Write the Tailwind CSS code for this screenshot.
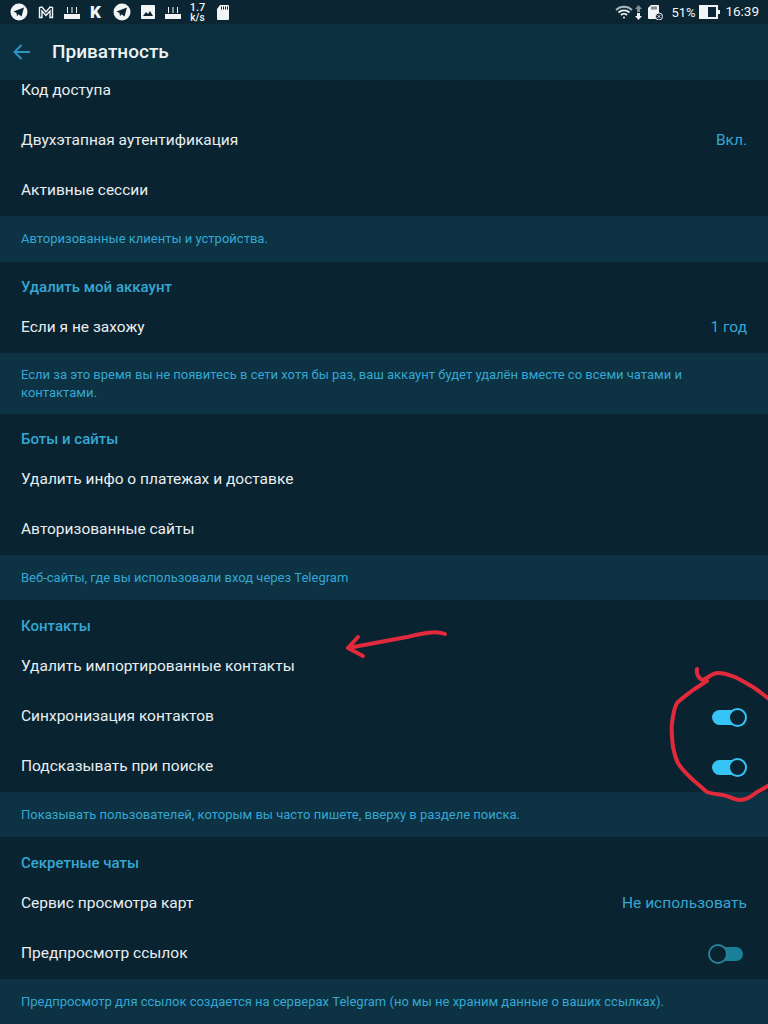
<!DOCTYPE html>
<html lang="ru">
<head>
  <meta charset="UTF-8">
  <title>Приватность</title>
  <script src="https://cdn.jsdelivr.net/npm/@tailwindcss/browser@4"></script>
</head>
<body class="bg-[#0a2330] text-white font-['Roboto',sans-serif]">
<div class="relative w-[768px] h-[1024px] overflow-hidden flex flex-col">

  <!-- status bar -->
  <div class="h-6 shrink-0 bg-[#0b2632] flex items-center justify-between pl-[10px] pr-[9px] text-[#f2f5f6]">
    <div class="flex items-center">
      <svg class="w-[18px] h-[18px] mr-[10px]" viewBox="0 0 18 18"><circle cx="9" cy="9" r="8.5" fill="#f2f5f6"/><path d="M3.5 8.5 14 4.5l-2.5 9-3-2.2-1.5 2-.5-3.3z" fill="#0b2632"/></svg>
      <svg class="w-[16px] h-[13px] mr-[10px]" viewBox="0 0 16 13" fill="none" stroke="#f2f5f6" stroke-width="1.4"><path d="M1.5 11.5V1.5L4 1l4 5 4-5 2.5.5v10h-2.5V5L8 9.5 4 5v6.5z"/></svg>
      <svg class="w-[16px] h-[13px] mr-[10px]" viewBox="0 0 16 13" fill="#f2f5f6"><path d="M0 8h16v5H0zM3 1h1v6H3zM7.5 1h1v6h-1zM12 1h1v6h-1z"/></svg>
      <span class="w-[14px] mr-[9px] text-[17px] leading-none font-black">K</span>
      <svg class="w-[18px] h-[18px] mr-[10px]" viewBox="0 0 18 18"><circle cx="9" cy="9" r="8.5" fill="#f2f5f6"/><path d="M3.5 8.5 14 4.5l-2.5 9-3-2.2-1.5 2-.5-3.3z" fill="#0b2632"/></svg>
      <svg class="w-[14px] h-[14px] mr-[10px]" viewBox="0 0 14 14"><rect width="14" height="14" rx="1" fill="#f2f5f6"/><path d="M2 11l3-4 2 2 2-3 3 5z" fill="#0b2632"/></svg>
      <svg class="w-[16px] h-[13px] mr-[9px]" viewBox="0 0 16 13" fill="#f2f5f6"><path d="M0 8h16v5H0zM3 1h1v6H3zM7.5 1h1v6h-1zM12 1h1v6h-1z"/></svg>
      <span class="w-[15px] mr-[12px] flex flex-col items-center text-[10px] leading-[9px] font-medium"><span class="text-[11px] leading-[10px]">1.7</span><span>k/s</span></span>
      <svg class="w-[12px] h-[15px]" viewBox="0 0 12 15"><path d="M3 0h8a1 1 0 0 1 1 1v13a1 1 0 0 1-1 1H1a1 1 0 0 1-1-1V4z" fill="#f2f5f6"/><path d="M4 1.5h1v3H4zM6 1.5h1v3H6zM8 1.5h1v3H8zM10 1.5h1v3h-1z" fill="#0b2632"/></svg>
    </div>
    <div class="flex items-center">
      <svg class="w-[18px] h-[14px] mr-[2px]" viewBox="0 0 18 14" fill="none" stroke="#f2f5f6" stroke-width="1.8"><path d="M1 5a11.5 11.5 0 0 1 16 0" stroke="#aab6bb"/><path d="M3.5 7.5a8 8 0 0 1 11 0M6 10a4.4 4.4 0 0 1 6 0"/><circle cx="9" cy="12.5" r="1" fill="#f2f5f6" stroke="none"/></svg>
      <svg class="w-[7px] h-[15px] mr-[6px]" viewBox="0 0 7 15"><path d="M3.5 0 7 4H5v3H2V4H0z" fill="#7f8f96"/><path d="M2 8h3v3h2l-3.500 4L0 11h2z" fill="#f2f5f6"/></svg>
      <svg class="w-[15px] h-[15px] mr-[8px]" viewBox="0 0 15 15"><path d="M3 0h7a1 1 0 0 1 1 1v13H1a1 1 0 0 1-1-1V3z" fill="#f2f5f6"/><path d="M3.500 1.500h1v3h-1zM5.500 1.500h1v3h-1zM7.500 1.500h1v3h-1z" fill="#0b2632"/><circle cx="11" cy="11.500" r="3.500" fill="#0b2632" stroke="#f2f5f6"/><path d="M9.700 10.200l2.600 2.600M12.300 10.200l-2.600 2.600" stroke="#f2f5f6"/></svg>
      <span class="text-[13px] leading-none mr-[2px] w-[26px]">51%</span>
      <svg class="w-[21px] h-[14px] mr-[5px]" viewBox="0 0 21 14"><rect width="19" height="14" fill="#f2f5f6"/><rect x="9" y="2" width="8" height="10" fill="#0b2632"/><rect x="19" y="5" width="2" height="4" fill="#f2f5f6"/></svg>
      <span class="text-[13.500px] leading-none">16:39</span>
    </div>
  </div>

  <!-- header -->
  <div class="relative z-10 h-14 shrink-0 bg-[#0b3040] flex items-center pl-[13px]">
    <svg class="w-[18px] h-[16px] mr-[21px]" viewBox="0 0 18 16" fill="none" stroke="#2f93bd" stroke-width="2"><path d="M17 8H2M8.500 1 1.500 8l7 7"/></svg>
    <span class="text-[19px] font-medium text-[#eef3f5]">Приватность</span>
  </div>

  <!-- list, scrolled by 14px -->
  <div class="-mt-[14px] flex flex-col text-[15.500px] text-[#e8eef0]">
    <div class="h-[50px] flex items-center px-[21px]">Код доступа</div>
    <div class="h-[50px] flex items-center justify-between px-[21px]"><span>Двухэтапная аутентификация</span><span class="text-[#35a7d2] pr-0">Вкл.</span></div>
    <div class="h-[50px] flex items-center px-[21px]">Активные сессии</div>
    <div class="h-[46px] flex items-center px-[21px] bg-[#0c3244] text-[13px] text-[#35a7d2]">Авторизованные клиенты и устройства.</div>

    <div class="h-[41px] flex items-end pb-[5px] px-[21px] text-[#35a7d2] font-medium text-[15px]">Удалить мой аккаунт</div>
    <div class="h-[50px] flex items-center justify-between px-[21px]"><span>Если я не захожу</span><span class="text-[#35a7d2]">1 год</span></div>
    <div class="h-[61px] flex items-center px-[21px] bg-[#0c3244] text-[13px] leading-[18px] text-[#35a7d2]">
      <p class="w-[700px]">Если за это время вы не появитесь в сети хотя бы раз, ваш аккаунт будет удалён вместе со всеми чатами и контактами.</p>
    </div>

    <div class="h-[41px] flex items-end pb-[5px] px-[21px] text-[#35a7d2] font-medium text-[15px]">Боты и сайты</div>
    <div class="h-[50px] flex items-center px-[21px]">Удалить инфо о платежах и доставке</div>
    <div class="h-[50px] flex items-center px-[21px]">Авторизованные сайты</div>
    <div class="h-[45px] flex items-center px-[21px] bg-[#0c3244] text-[13px] text-[#35a7d2]">Веб-сайты, где вы использовали вход через Telegram</div>

    <div class="h-[42px] flex items-end pb-[5px] px-[21px] text-[#35a7d2] font-medium text-[15px]">Контакты</div>
    <div class="h-[50px] flex items-center px-[21px]">Удалить импортированные контакты</div>
    <div class="h-[50px] flex items-center justify-between pl-[21px] pr-[22px]">
      <span>Синхронизация контактов</span>
      <span class="relative w-[34px] h-[15px] rounded-full bg-[#36c3f5]"><span class="absolute -right-px -top-[2px] w-[19px] h-[19px] rounded-full bg-[#0a2330] border-2 border-[#36c3f5]"></span></span>
    </div>
    <div class="h-[50px] flex items-center justify-between pl-[21px] pr-[22px]">
      <span>Подсказывать при поиске</span>
      <span class="relative w-[34px] h-[15px] rounded-full bg-[#36c3f5]"><span class="absolute -right-px -top-[2px] w-[19px] h-[19px] rounded-full bg-[#0a2330] border-2 border-[#36c3f5]"></span></span>
    </div>
    <div class="h-[45px] flex items-center px-[21px] bg-[#0c3244] text-[13px] text-[#35a7d2]">Показывать пользователей, которым вы часто пишете, вверху в разделе поиска.</div>

    <div class="h-[42px] flex items-end pb-[5px] px-[21px] text-[#35a7d2] font-medium text-[15px]">Секретные чаты</div>
    <div class="h-[50px] flex items-center justify-between px-[21px]"><span>Сервис просмотра карт</span><span class="text-[#35a7d2]">Не использовать</span></div>
    <div class="h-[50px] flex items-center justify-between pl-[21px] pr-[25px]">
      <span>Предпросмотр ссылок</span>
      <span class="relative w-[34px] h-[14px] rounded-full bg-[#1a7f99]"><span class="absolute -left-px -top-[3px] w-[20px] h-[20px] rounded-full bg-[#0a2330] border-2 border-[#2a8199]"></span></span>
    </div>
    <div class="h-[45px] flex items-center px-[21px] bg-[#0c3244] text-[13px] text-[#35a7d2]">Предпросмотр для ссылок создается на серверах Telegram (но мы не храним данные о ваших ссылках).</div>
  </div>

  <!-- red marker annotations -->
  <svg class="absolute inset-0 z-20 pointer-events-none" width="768" height="1024" viewBox="0 0 768 1024" fill="none" stroke="#e12a3c" stroke-width="4" stroke-linecap="round" stroke-linejoin="round">
    <path d="M445 634C435 630 420 634 407 637C390 640 365 645 348 648M358 637 348 648 363 656"/>
    <path d="M697 669C696 674 699 679 703 680C708 678 712 673 718 673C726 673 732 676 737 678C745 682 749 685 753 687C759 691 764 695 769 699M769 785C765 788 761 790 757 792C751 797 746 800 740 800C734 800 729 796 723 795C717 794 712 794 707 792C702 788 698 784 693 780C688 775 682 770 678 763C675 757 674 752 673 747C672 738 671 730 672 723C673 715 674 708 677 703C682 698 688 694 693 690C698 687 702 684 707 681"/>
  </svg>
</div>
</body>
</html>
